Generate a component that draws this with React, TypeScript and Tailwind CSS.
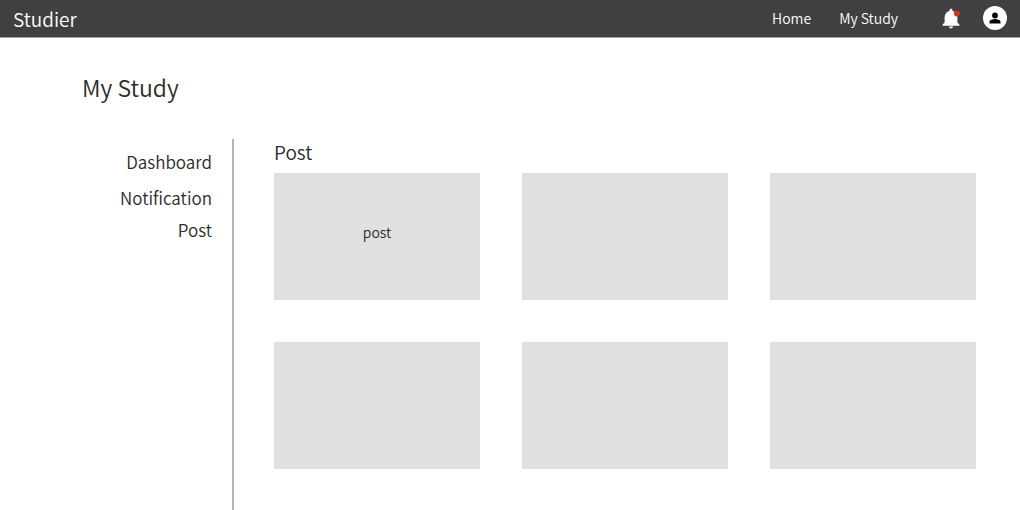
const side = [
  { label: 'Dashboard', cls: 'mb-2' },
  { label: 'Notification', cls: 'mb-1' },
  { label: 'Post', cls: '' },
];

const posts = ['post', '', '', '', '', ''];

export default function App() {
  return (
    <div className="flex min-h-screen flex-col bg-white font-['Noto_Sans_CJK_KR','Noto_Sans',sans-serif] font-[350] text-[#2b2b2b]">
      <header className="flex h-[38px] items-center justify-between border-b border-[#a0a0a0] bg-[#404040] px-[13px] text-white">
        <a href="#" className="text-[19px] leading-7">Studier</a>
        <nav className="flex items-center pb-0.5 text-[14px] leading-6">
          <a href="#" className="mr-7">Home</a>
          <a href="#" className="mr-[41px]">My Study</a>
          <button aria-label="Notifications" className="mr-5">
            <svg viewBox="0 0 24 24" className="h-6 w-6">
              <path fill="#fff" d="M12 22.500c1.100 0 2-.7 2-2h-4c0 1.300.9 2 2 2zM18.400 16.500V11.500c0-3.300-1.900-5.900-4.900-6.500V4.200c0-.9-.6-1.500-1.500-1.500s-1.500.6-1.500 1.500V5c-3 .6-4.900 3.200-4.900 6.500v5l-2 2v1.200h16.800v-1.200z" />
              <circle cx="18" cy="7.500" r="3" fill="#c93428" />
            </svg>
          </button>
          <button aria-label="Account">
            <svg viewBox="0 0 24 24" className="h-6 w-6">
              <circle cx="12" cy="12" r="12" fill="#fff" />
              <circle cx="12" cy="9.400" r="2.900" fill="#000" />
              <path fill="#000" d="M6.500 17.500V16c0-2 3.600-2.900 5.500-2.900s5.500.9 5.500 2.900v1.500z" />
            </svg>
          </button>
        </nav>
      </header>
      <main className="flex flex-1 flex-col pl-[82px] pr-11">
        <h1 className="mt-[31px] text-[23px] leading-9">My Study</h1>
        <div className="mt-[34px] flex flex-1">
          <aside className="w-[152px] shrink-0 border-r-2 border-[#b4b4b4] pr-5 pt-[9px] text-right text-[17px] leading-7">
            <ul>
              {side.map((s) => (
                <li key={s.label} className={s.cls}><a href="#">{s.label}</a></li>
              ))}
            </ul>
          </aside>
          <section className="min-w-0 flex-1 pl-10">
            <h2 className="text-[19px] leading-[26px]">Post</h2>
            <div className="mt-2 grid grid-cols-3 gap-[42px]">
              {posts.map((p, i) => (
                <article key={i} className="flex h-[127px] items-center justify-center bg-[#e0e0e0] pb-[10px] text-[14px] leading-6">{p}</article>
              ))}
            </div>
          </section>
        </div>
      </main>
    </div>
  );
}
